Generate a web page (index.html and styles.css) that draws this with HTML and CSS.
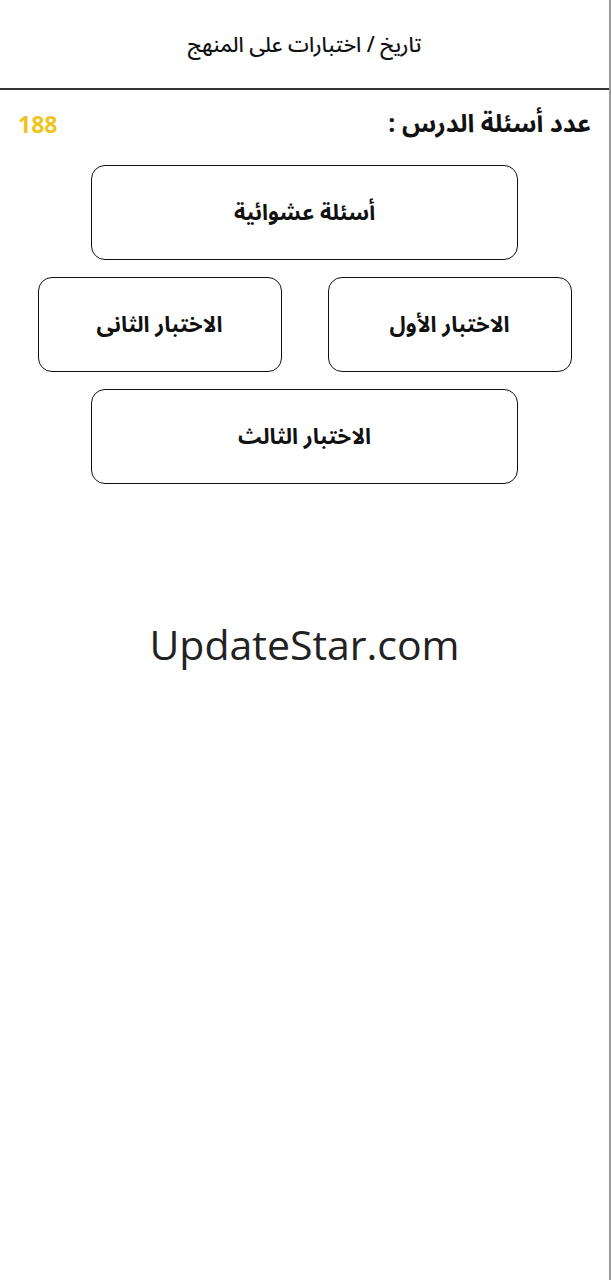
FILE: index.html
```html
<!DOCTYPE html>
<html lang="ar" dir="rtl">
<head>
<meta charset="utf-8">
<title>اختبارات على المنهج</title>
<link rel="stylesheet" href="styles.css">
</head>
<body>
<div class="page">
  <header class="topbar">
    <h1 class="title">تاريخ / اختبارات على المنهج</h1>
  </header>
  <div class="count-row">
    <span class="count-label">عدد أسئلة الدرس :</span>
    <span class="count-value">188</span>
  </div>
  <div class="buttons">
    <button class="btn btn-wide">أسئلة عشوائية</button>
    <div class="btn-pair">
      <button class="btn btn-half">الاختبار الأول</button>
      <button class="btn btn-half">الاختبار الثانى</button>
    </div>
    <button class="btn btn-wide">الاختبار الثالث</button>
  </div>
  <div class="watermark" dir="ltr">UpdateStar.com</div>
</div>
</body>
</html>
```

FILE: styles.css
```css
html, body {
  margin: 0;
  padding: 0;
  background: #ffffff;
}
body {
  font-family: "Noto Sans Arabic", "DejaVu Sans", "Noto Sans", sans-serif;
  color: #111;
}
.page {
  width: 609px;
  height: 1280px;
  border-right: 2px solid #9a9a9a;
  box-sizing: content-box;
}
.topbar {
  height: 88px;
  border-bottom: 2px solid #333;
  display: flex;
  align-items: center;
  justify-content: center;
}
.title {
  margin: 0;
  font-size: 21px;
  font-weight: 500;
  color: #111;
  padding-top: 2px;
}
.count-row {
  display: flex;
  justify-content: space-between;
  align-items: center;
  height: 68px;
  padding: 0 18px;
}
.count-label {
  font-size: 25px;
  font-weight: 700;
  color: #111;
}
.count-value {
  font-family: "Open Sans", "Noto Sans", sans-serif;
  font-size: 23px;
  font-weight: 700;
  color: #f0c420;
}
.buttons {
  display: flex;
  flex-direction: column;
  align-items: center;
  gap: 17px;
  margin-top: 7px;
}
.btn-pair {
  display: flex;
  gap: 46px;
}
.btn {
  font-family: "Noto Sans Arabic", "DejaVu Sans", sans-serif;
  font-size: 22px;
  font-weight: 700;
  color: #111;
  background: #fff;
  border: 1.7px solid #111;
  border-radius: 14px;
  height: 95px;
  cursor: pointer;
}
.btn-wide {
  width: 427px;
}
.btn-half {
  width: 244px;
}
.watermark {
  margin-top: 132px;
  text-align: center;
  font-family: "Open Sans", "Noto Sans", sans-serif;
  font-size: 41px;
  color: #222;
}
```
